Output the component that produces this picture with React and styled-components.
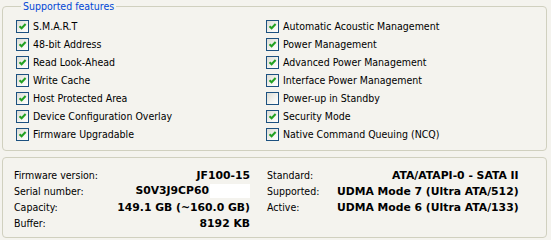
import React from "react";
import styled, { createGlobalStyle } from "styled-components";

const GlobalStyle = createGlobalStyle`
  body {
    margin: 0;
    background: #f4f3ee;
    font-family: "DejaVu Sans Condensed", "DejaVu Sans", sans-serif;
    font-stretch: condensed;
    font-size: 10.5px;
    color: #000;
  }
`;

const Page = styled.div`
  width: 551px;
  height: 240px;
  padding: 0 4px 0 2px;
  box-sizing: border-box;
  display: flex;
  flex-direction: column;
  gap: 6px;
`;

const GroupBox = styled.fieldset`
  margin: 0;
  padding: 5px 0 0 13px;
  height: 151px;
  box-sizing: border-box;
  border: 1px solid #d0d0bf;
  border-radius: 4px;
`;

const Legend = styled.legend`
  color: #0046d5;
  padding: 0 2px;
  margin-left: 5px;
  font-size: 10.5px;
`;

const FeatureGrid = styled.div`
  display: grid;
  grid-template-columns: 250px 1fr;
  grid-auto-flow: column;
  grid-template-rows: repeat(7, 18px);
`;

const Feature = styled.label`
  display: flex;
  align-items: center;
  gap: 4px;
  white-space: nowrap;
`;

const Box = styled.span`
  width: 11px;
  height: 11px;
  border: 1px solid #1c5180;
  background: linear-gradient(135deg, #dcdcd5 0%, #f4f4f0 60%, #ffffff 100%);
  display: flex;
  align-items: center;
  justify-content: center;
  flex-shrink: 0;
`;

const InfoPanel = styled.div`
  height: 81px;
  box-sizing: border-box;
  border: 1px solid #d0d0bf;
  border-radius: 4px;
  padding: 9px 0 0 11px;
  display: grid;
  grid-template-columns: 236px 249px;
  column-gap: 17px;
`;

const InfoColumn = styled.div`
  display: grid;
  grid-template-columns: ${(p) => p.$label}px 1fr;
  grid-auto-rows: 16px;
  align-items: center;
`;

const Label = styled.span`
  white-space: nowrap;
`;

const Value = styled.span`
  font-weight: bold;
  font-family: "DejaVu Sans", Verdana, sans-serif;
  font-stretch: normal;
  font-size: 10.8px;
  text-align: right;
  white-space: nowrap;
`;

const Redact = styled.span`
  display: inline-block;
  width: 40px;
  height: 14px;
  background: #fff;
  vertical-align: middle;
  margin-left: 1px;
`;

function Check({ checked }) {
  return (
    <Box>
      {checked && (
        <svg width="9" height="9" viewBox="0 0 9 9">
          <path
            d="M1.5 4.2 L3.6 6.3 L7.6 2"
            fill="none"
            stroke="#21a121"
            strokeWidth="2"
          />
        </svg>
      )}
    </Box>
  );
}

const features = [
  ["S.M.A.R.T", true],
  ["48-bit Address", true],
  ["Read Look-Ahead", true],
  ["Write Cache", true],
  ["Host Protected Area", true],
  ["Device Configuration Overlay", true],
  ["Firmware Upgradable", true],
  ["Automatic Acoustic Management", true],
  ["Power Management", true],
  ["Advanced Power Management", true],
  ["Interface Power Management", true],
  ["Power-up in Standby", false],
  ["Security Mode", true],
  ["Native Command Queuing (NCQ)", true],
];

export default function App() {
  return (
    <>
      <GlobalStyle />
      <Page>
        <GroupBox>
          <Legend>Supported features</Legend>
          <FeatureGrid>
            {features.map(([name, on]) => (
              <Feature key={name}>
                <Check checked={on} />
                {name}
              </Feature>
            ))}
          </FeatureGrid>
        </GroupBox>
        <InfoPanel>
          <InfoColumn $label={80}>
            <Label>Firmware version:</Label>
            <Value>JF100-15</Value>
            <Label>Serial number:</Label>
            <Value>
              S0V3J9CP60
              <Redact />
            </Value>
            <Label>Capacity:</Label>
            <Value>149.1 GB (~160.0 GB)</Value>
            <Label>Buffer:</Label>
            <Value>8192 KB</Value>
          </InfoColumn>
          <InfoColumn $label={70}>
            <Label>Standard:</Label>
            <Value>ATA/ATAPI-0 - SATA II</Value>
            <Label>Supported:</Label>
            <Value>UDMA Mode 7 (Ultra ATA/512)</Value>
            <Label>Active:</Label>
            <Value>UDMA Mode 6 (Ultra ATA/133)</Value>
          </InfoColumn>
        </InfoPanel>
      </Page>
    </>
  );
}
